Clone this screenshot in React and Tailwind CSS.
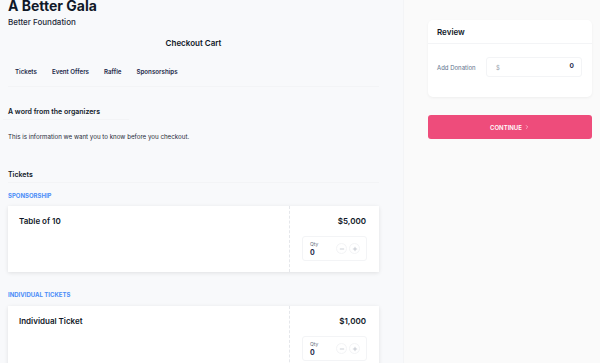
import { ChevronRight, Minus, Plus } from 'lucide-react';

const tabs = ['Tickets', 'Event Offers', 'Raffle', 'Sponsorships'];

function QtyBox() {
  return (
    <div className="mt-[10px] flex h-[25px] items-center justify-between rounded-[3px] border border-gray-100 pl-[7px] pr-[6px]">
      <div className="flex flex-col">
        <span className="text-[5px] leading-[6px] text-gray-500">Qty</span>
        <span className="mt-[2px] text-[7px] font-bold leading-[8px] text-[#1e2a4a]">0</span>
      </div>
      <div className="flex gap-[2px]">
        <span className="flex h-[11px] w-[11px] items-center justify-center rounded-full border border-gray-100 text-gray-400">
          <Minus size={6} strokeWidth={2} />
        </span>
        <span className="flex h-[11px] w-[11px] items-center justify-center rounded-full border border-gray-100 text-gray-400">
          <Plus size={6} strokeWidth={2} />
        </span>
      </div>
    </div>
  );
}

function TicketCard({ title, price }) {
  return (
    <div className="flex h-[66px] w-[371px] bg-white shadow-[0_1px_4px_rgba(0,0,0,0.1)]">
      <div className="flex-1 px-[11px] pt-[10px] text-[8px] font-semibold leading-[10px] text-gray-900">{title}</div>
      <div className="w-[90px] border-l border-dashed border-gray-200 px-[12px] pt-[10px]">
        <div className="pr-[1px] text-right text-[8px] font-semibold leading-[10px] text-gray-900">{price}</div>
        <QtyBox />
      </div>
    </div>
  );
}

export default function App() {
  return (
    <div className="flex h-[363px] w-[600px] overflow-hidden font-['Inter',sans-serif] text-gray-900">
      <div className="w-[403px] shrink-0 overflow-hidden bg-[#f8f9fb] px-2">
        <h1 className="-mt-[2px] text-[14px] font-bold leading-[16px] text-gray-900">A Better Gala</h1>
        <div className="mt-[3px] text-[8px] font-medium leading-[10px] text-gray-800">Better Foundation</div>
        <div className="mt-[11px] w-[371px] text-center text-[8px] font-semibold leading-[10px]">Checkout Cart</div>
        <div className="mt-[20px] flex w-[371px] gap-[15px] border-b border-gray-100 pb-[10px] pl-[7px]">
          {tabs.map((t) => (
            <span key={t} className="text-[6.2px] font-semibold leading-[8px] text-[#1e2a4a]">
              {t}
            </span>
          ))}
        </div>
        <div className="-ml-[5px] mt-[20px] w-[126px] border-b border-gray-100 pb-[3px] pl-[5px] text-[7px] font-semibold leading-[9px]">
          A word from the organizers
        </div>
        <p className="mt-[13px] text-[6.2px] leading-[8px] text-gray-800">
          This is information we want you to know before you checkout.
        </p>
        <div className="mt-[29px] w-[371px] border-b border-gray-100 pb-[3px] text-[7px] font-semibold leading-[9px]">
          Tickets
        </div>
        <div className="mt-[9px] text-[6px] font-bold leading-[8px] text-[#4b8df8]">SPONSORSHIP</div>
        <div className="mt-[6px]">
          <TicketCard title="Table of 10" price="$5,000" />
        </div>
        <div className="mt-[19px] text-[6px] font-bold leading-[8px] text-[#4b8df8]">INDIVIDUAL TICKETS</div>
        <div className="mt-[7px]">
          <TicketCard title="Individual Ticket" price="$1,000" />
        </div>
      </div>
      <div className="flex-1 border-l border-gray-100 bg-[#fafafa] pl-[24px] pr-[8px] pt-[20px]">
        <div className="rounded-[5px] bg-white shadow-[0_1px_3px_rgba(0,0,0,0.05)]">
          <div className="border-b border-gray-100 pb-[6px] pl-[9px] pt-[8px] text-[8px] font-semibold leading-[9px]">Review</div>
          <div className="flex items-center pb-[20px] pl-[9px] pr-[10px] pt-[13px]">
            <span className="w-[49px] whitespace-nowrap text-[6px] text-slate-500">Add Donation</span>
            <div className="flex h-[20px] flex-1 items-center justify-between rounded-[3px] border border-gray-100 pl-[9px] pr-[7px]">
              <span className="text-[6px] text-gray-400">$</span>
              <span className="text-[6.5px] font-bold text-[#1e2a4a]">0</span>
            </div>
          </div>
        </div>
        <button className="mt-[18px] flex h-[24px] w-full items-center justify-center gap-[2px] rounded-[3px] bg-[#ee4c7b] text-[6px] font-semibold text-white">
          CONTINUE
          <ChevronRight size={6} strokeWidth={2} />
        </button>
      </div>
    </div>
  );
}
